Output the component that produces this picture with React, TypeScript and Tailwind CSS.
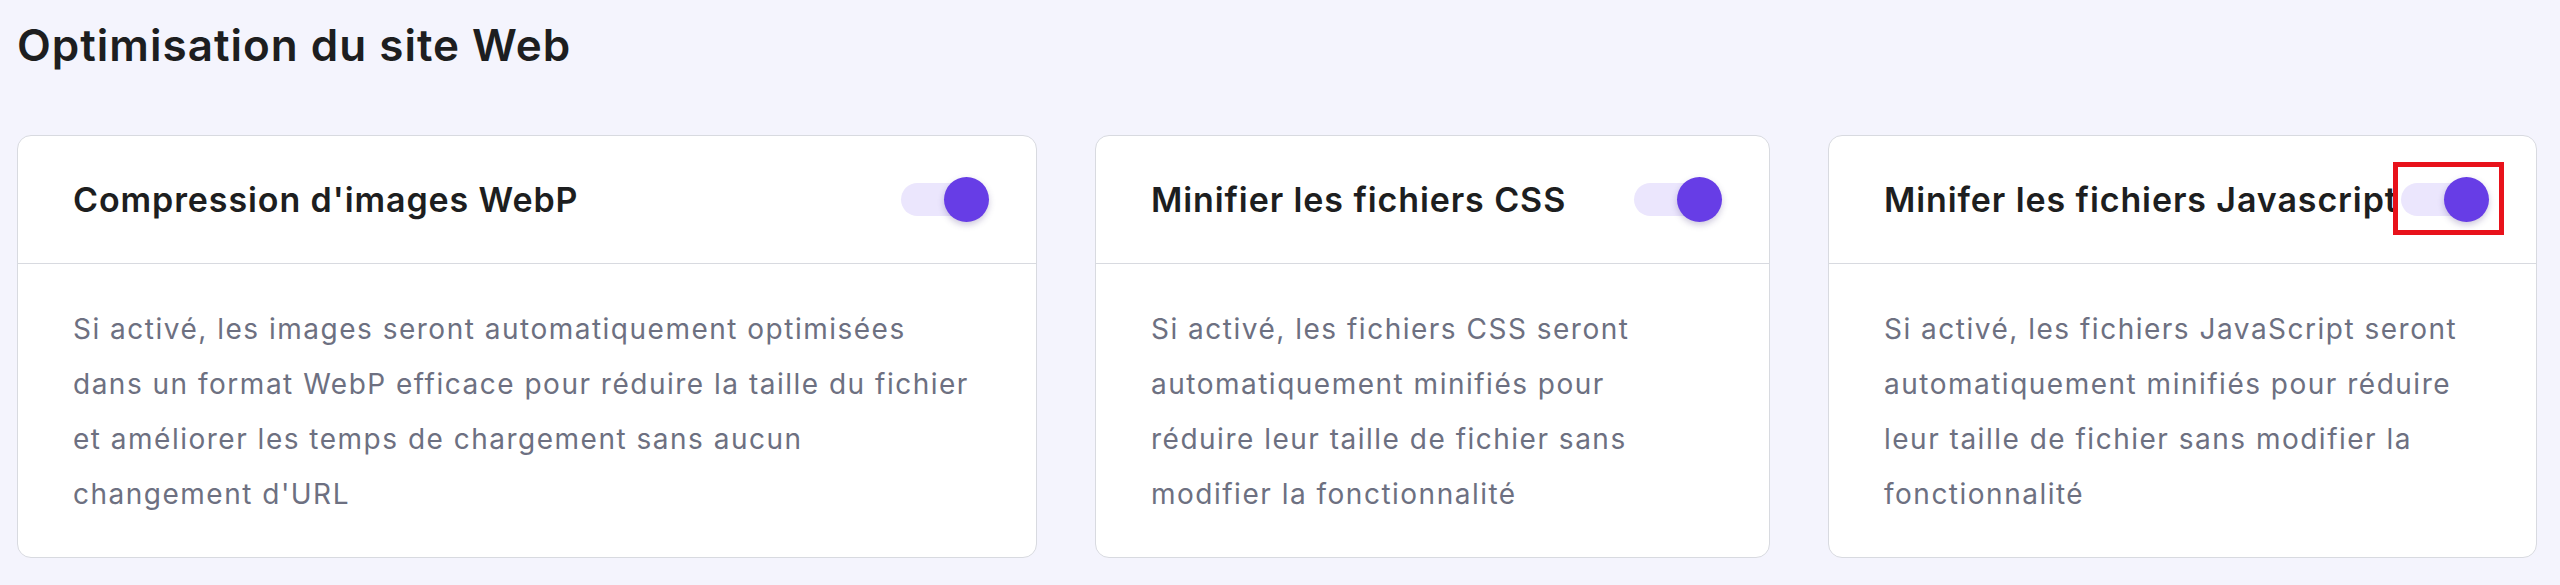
import { useState } from 'react';

type Opt = { title: string; lines: string[]; w: string };

const options: Opt[] = [
  {
    title: "Compression d'images WebP",
    lines: [
      'Si activé, les images seront automatiquement optimisées',
      'dans un format WebP efficace pour réduire la taille du fichier',
      'et améliorer les temps de chargement sans aucun',
      "changement d'URL",
    ],
    w: 'w-[1020px]',
  },
  {
    title: 'Minifier les fichiers CSS',
    lines: [
      'Si activé, les fichiers CSS seront',
      'automatiquement minifiés pour',
      'réduire leur taille de fichier sans',
      'modifier la fonctionnalité',
    ],
    w: 'w-[675px]',
  },
  {
    title: 'Minifer les fichiers Javascript',
    lines: [
      'Si activé, les fichiers JavaScript seront',
      'automatiquement minifiés pour réduire',
      'leur taille de fichier sans modifier la',
      'fonctionnalité',
    ],
    w: 'w-[709px]',
  },
];

function Toggle({ on, onClick, marked }: { on: boolean; onClick: () => void; marked?: boolean }) {
  return (
    <button onClick={onClick} className="relative flex items-center shrink-0 w-[88px] h-[45px]">
      <span className={`w-[80px] h-[33px] rounded-full ${on ? 'bg-[#ebe6fd]' : 'bg-[#e3e4e8]'}`} />
      <span
        className={`-ml-[37px] w-[45px] h-[45px] rounded-full shadow-[0_3px_6px_rgba(60,40,120,0.25)] ${on ? 'bg-[#673de6]' : 'bg-white'}`}
      />
      {marked && <span className="absolute left-[-8px] top-[-15px] w-[111px] h-[73px] border-[5px] border-[#e8121b]" />}
    </button>
  );
}

export default function App() {
  const [on, setOn] = useState([true, true, true]);

  return (
    <div className="min-h-screen bg-[#f4f4fd] pl-[17px] pt-[17px] font-['Inter',sans-serif]">
      <h1 className="text-[44px] leading-[56px] font-semibold text-[#1d1e20] tracking-[1px]">Optimisation du site Web</h1>
      <div className="flex gap-[58px] mt-[62px]">
        {options.map((o, i) => (
          <div key={i} className={`${o.w} bg-white border-[1.5px] border-[#d8dae0] rounded-[14px]`}>
            <div className="flex items-center justify-between h-[128px] pl-[55px] pr-[47px] border-b-[1.5px] border-[#d8dae0]">
              <span className="text-[34px] font-semibold text-[#1d1e20] tracking-[0.9px] whitespace-nowrap">{o.title}</span>
              <Toggle
                on={on[i]}
                marked={i === 2}
                onClick={() => setOn(on.map((v, j) => (j === i ? !v : v)))}
              />
            </div>
            <div className="pl-[55px] pt-[38px] pb-[35px] text-[28px] leading-[55px] text-[#6d7081] tracking-[1.5px]">
              {o.lines.map((l, k) => (
                <div key={k} className="whitespace-nowrap">{l}</div>
              ))}
            </div>
          </div>
        ))}
      </div>
    </div>
  );
}
